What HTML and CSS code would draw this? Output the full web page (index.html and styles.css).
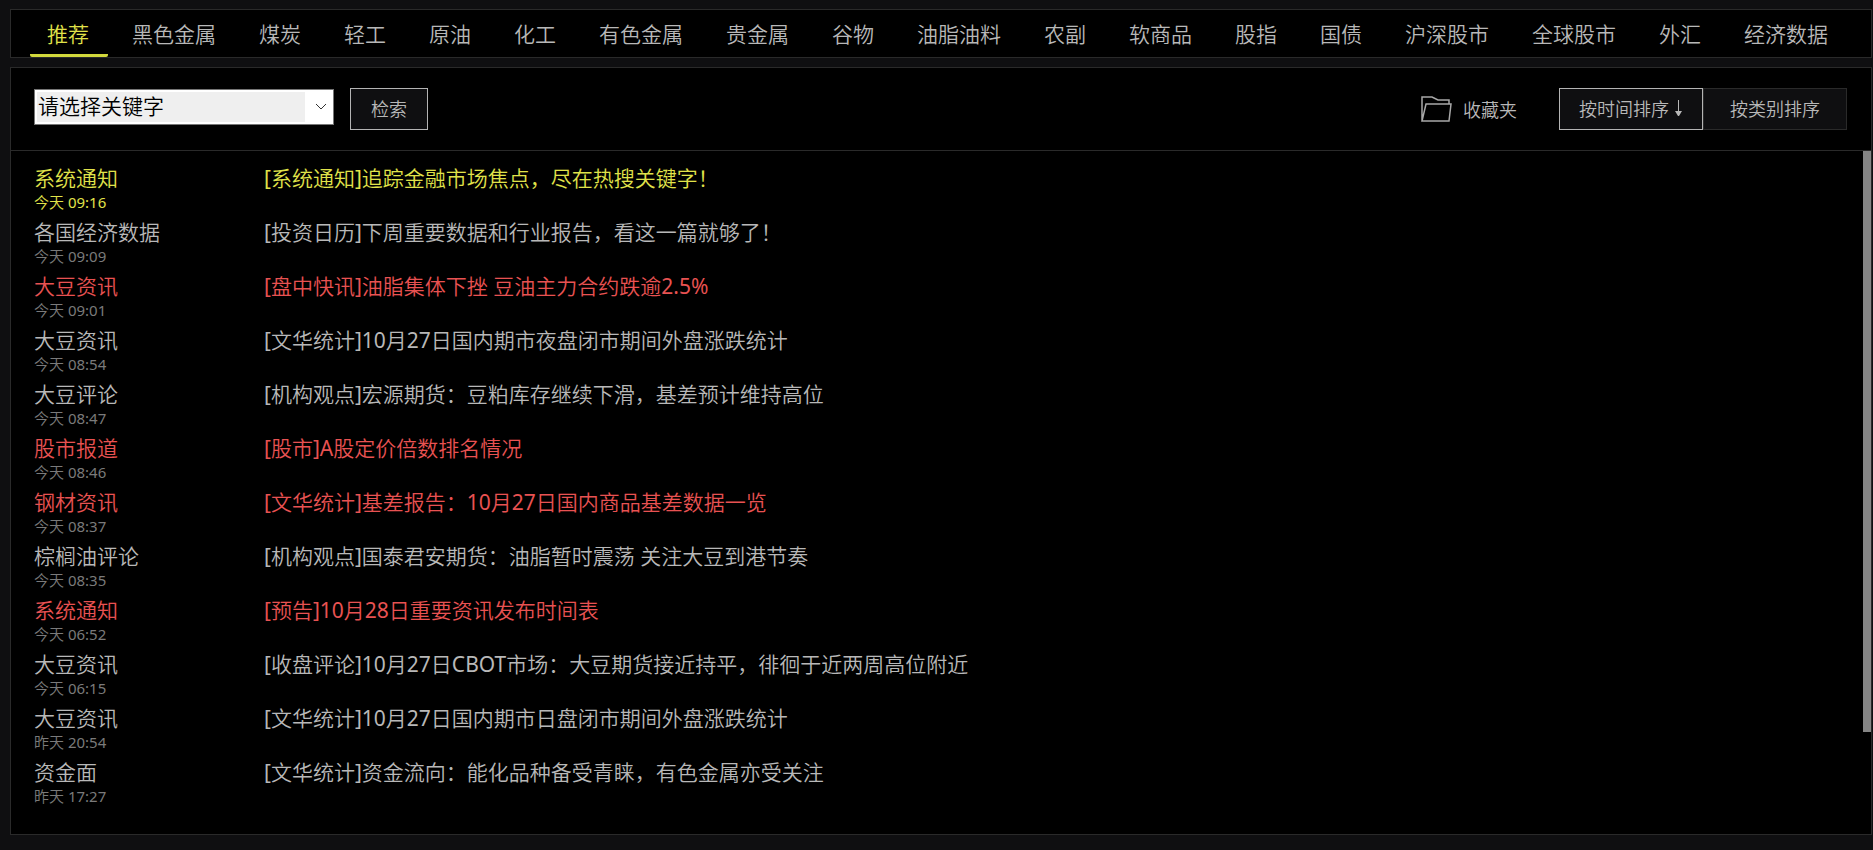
FILE: index.html
```html
<!DOCTYPE html>
<html lang="zh-CN">
<head>
    <meta charset="UTF-8">
    <meta name="viewport" content="width=device-width, initial-scale=1.0">
    <title>资讯</title>
    <link rel="stylesheet" href="styles.css">
</head>
<body>

    <!-- 分类导航 -->
    <nav class="nav">
        <a href="#" class="nav-item active">推荐</a>
        <a href="#" class="nav-item">黑色金属</a>
        <a href="#" class="nav-item">煤炭</a>
        <a href="#" class="nav-item">轻工</a>
        <a href="#" class="nav-item">原油</a>
        <a href="#" class="nav-item">化工</a>
        <a href="#" class="nav-item">有色金属</a>
        <a href="#" class="nav-item">贵金属</a>
        <a href="#" class="nav-item">谷物</a>
        <a href="#" class="nav-item">油脂油料</a>
        <a href="#" class="nav-item">农副</a>
        <a href="#" class="nav-item">软商品</a>
        <a href="#" class="nav-item">股指</a>
        <a href="#" class="nav-item">国债</a>
        <a href="#" class="nav-item">沪深股市</a>
        <a href="#" class="nav-item">全球股市</a>
        <a href="#" class="nav-item">外汇</a>
        <a href="#" class="nav-item">经济数据</a>
    </nav>

    <div class="panel">

        <!-- 检索栏 -->
        <div class="toolbar">
            <div class="search-box">
                <div class="select-wrap">
                    <select class="keyword" aria-label="关键字">
                        <option>请选择关键字</option>
                    </select>
                    <svg class="arrow" viewBox="0 0 12 7" aria-hidden="true"><path d="M1 1l5 5 5-5"/></svg>
                </div>
                <button class="button">检索</button>
            </div>
            <a href="#" class="favorites">
                <svg class="folder" viewBox="0 0 31 26" aria-hidden="true">
                    <path d="M1 25V1h10l6 3h11v4M1 25h27l2-17H5z"/>
                </svg>
                收藏夹
            </a>
            <div class="sort-box">
                <button class="button sort">按时间排序<svg class="down" viewBox="0 0 9 18" aria-hidden="true"><path d="M4 1h1v11h3l-3 5h-1l-3-5h3z"/></svg></button>
                <button class="button sort off">按类别排序</button>
            </div>
        </div>

        <!-- 资讯列表 -->
        <div class="content">
            <ul class="news-list">
                <li class="news-item top">
                    <div class="source">系统通知<span class="time">今天 09:16</span></div>
                    <a href="#" class="title">[系统通知]追踪金融市场焦点，尽在热搜关键字！</a>
                </li>
                <li class="news-item">
                    <div class="source">各国经济数据<span class="time">今天 09:09</span></div>
                    <a href="#" class="title">[投资日历]下周重要数据和行业报告，看这一篇就够了！</a>
                </li>
                <li class="news-item hot">
                    <div class="source">大豆资讯<span class="time">今天 09:01</span></div>
                    <a href="#" class="title">[盘中快讯]油脂集体下挫 豆油主力合约跌逾2.5%</a>
                </li>
                <li class="news-item">
                    <div class="source">大豆资讯<span class="time">今天 08:54</span></div>
                    <a href="#" class="title">[文华统计]10月27日国内期市夜盘闭市期间外盘涨跌统计</a>
                </li>
                <li class="news-item">
                    <div class="source">大豆评论<span class="time">今天 08:47</span></div>
                    <a href="#" class="title">[机构观点]宏源期货：豆粕库存继续下滑，基差预计维持高位</a>
                </li>
                <li class="news-item hot">
                    <div class="source">股市报道<span class="time">今天 08:46</span></div>
                    <a href="#" class="title">[股市]A股定价倍数排名情况</a>
                </li>
                <li class="news-item hot">
                    <div class="source">钢材资讯<span class="time">今天 08:37</span></div>
                    <a href="#" class="title">[文华统计]基差报告：10月27日国内商品基差数据一览</a>
                </li>
                <li class="news-item">
                    <div class="source">棕榈油评论<span class="time">今天 08:35</span></div>
                    <a href="#" class="title">[机构观点]国泰君安期货：油脂暂时震荡 关注大豆到港节奏</a>
                </li>
                <li class="news-item hot">
                    <div class="source">系统通知<span class="time">今天 06:52</span></div>
                    <a href="#" class="title">[预告]10月28日重要资讯发布时间表</a>
                </li>
                <li class="news-item">
                    <div class="source">大豆资讯<span class="time">今天 06:15</span></div>
                    <a href="#" class="title">[收盘评论]10月27日CBOT市场：大豆期货接近持平，徘徊于近两周高位附近</a>
                </li>
                <li class="news-item">
                    <div class="source">大豆资讯<span class="time">昨天 20:54</span></div>
                    <a href="#" class="title">[文华统计]10月27日国内期市日盘闭市期间外盘涨跌统计</a>
                </li>
                <li class="news-item">
                    <div class="source">资金面<span class="time">昨天 17:27</span></div>
                    <a href="#" class="title">[文华统计]资金流向：能化品种备受青睐，有色金属亦受关注</a>
                </li>
            </ul>
            <div class="scrollbar"><div class="thumb"></div></div>
        </div>

    </div>

</body>
</html>
```
FILE: styles.css
```css
* {
    box-sizing: border-box;
}
body {
    display: flex;
    flex-direction: column;
    gap: 9px;
    min-height: 100vh;
    margin: 0;
    padding: 9px 1px 15px 10px;
    background-color: #0f0f11;
    color: #b8b8b8;
    font-family: "Noto Sans", "Noto Sans CJK SC DemiLight", "Noto Sans CJK SC", sans-serif;
    font-size: 21px;
    font-weight: 400;
}
a {
    color: inherit;
    text-decoration: none;
}
.nav {
    display: flex;
    gap: 7px;
    padding: 0 19px;
    background-color: #000;
    border: 1px solid #2a2a2a;
    white-space: nowrap;
}
.nav-item {
    padding: 4px 19px 0 17px;
    line-height: 40px;
    border-bottom: 3px solid transparent;
    border-radius: 2px;
}
.nav-item.active {
    color: #e0e34a;
    border-bottom-color: #d2d83c;
}
.panel {
    flex: 1;
    display: flex;
    flex-direction: column;
    background-color: #000;
    border: 1px solid #2a2a2a;
}
.toolbar {
    display: flex;
    align-items: center;
    padding: 20px 24px 20px 23px;
    border-bottom: 1px solid #2a2a2a;
}
.search-box {
    display: flex;
    align-items: flex-start;
    gap: 16px;
    margin-right: auto;
}
.select-wrap {
    position: relative;
    padding-top: 1px;
}
.keyword {
    appearance: none;
    display: block;
    width: 300px;
    height: 36px;
    padding: 0 30px 2px 3px;
    border: 1px solid #767676;
    border-radius: 0;
    background: #fff linear-gradient(#efefef, #efefef) 2px 2px / 268px 30px no-repeat;
    color: #000;
    font: inherit;
}
.arrow {
    position: absolute;
    top: 15px;
    right: 7px;
    width: 12px;
    height: 7px;
    fill: none;
    stroke: #333;
    pointer-events: none;
}
.button {
    height: 42px;
    padding: 0 20px 2px;
    background-color: #0f0f11;
    border: 1px solid #b4b4b4;
    color: inherit;
    font: inherit;
    font-size: 18px;
    cursor: pointer;
}
.favorites {
    display: flex;
    align-items: center;
    gap: 11px;
    margin-right: 42px;
    font-size: 18px;
}
.folder {
    width: 31px;
    height: 26px;
    fill: none;
    stroke: #a8a8a8;
    stroke-width: 1.5;
}
.sort-box {
    display: flex;
}
.sort {
    display: flex;
    align-items: center;
    justify-content: center;
    gap: 5px;
    width: 144px;
    padding: 0 0 2px;
}
.sort.off {
    border-color: #2a2a2a;
}
.down {
    width: 9px;
    height: 18px;
    fill: #b8b8b8;
}
.content {
    flex: 1;
    display: flex;
}
.news-list {
    flex: 1;
    margin: 0;
    padding: 12px 23px;
    list-style-type: none;
}
.news-item {
    display: grid;
    grid-template-columns: 230px 1fr;
    height: 54px;
    line-height: 30px;
}
.time {
    display: block;
    color: #7a7a7a;
    font-size: 15px;
    line-height: 18px;
}
.top,
.top .time {
    color: #e0e34a;
}
.hot {
    color: #e85252;
}
.hot .time {
    color: #7a7a7a;
}
.scrollbar {
    width: 8px;
}
.thumb {
    height: 85%;
    background-color: #858585;
}
```
